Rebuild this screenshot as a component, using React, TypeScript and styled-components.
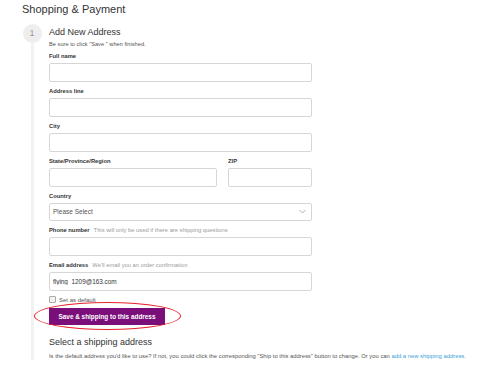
import React from "react";
import styled, { createGlobalStyle } from "styled-components";

const GlobalStyle = createGlobalStyle`
  html, body {
    margin: 0;
    padding: 0;
    background: #ffffff;
  }
  body {
    font-family: "Liberation Sans", Arial, sans-serif;
    color: #333333;
  }
`;

interface FieldProps {
  label: string;
  hint?: string;
  value?: string;
  width?: number;
}

const Field: React.FC<FieldProps> = ({ label, hint, value, width }) => {
  return (
    <StyledField $width={width}>
      <StyledLabel>
        {label}
        {hint && <StyledHint>{hint}</StyledHint>}
      </StyledLabel>
      <StyledInput defaultValue={value} />
    </StyledField>
  );
};

const App: React.FC = () => {
  return (
    <StyledPage>
      <GlobalStyle />
      <StyledTitle>Shopping &amp; Payment</StyledTitle>
      <StyledStep>
        <StyledRail>
          <StyledCircle>1</StyledCircle>
          <StyledLine />
        </StyledRail>
        <StyledContent>
          <StyledHeading>Add New Address</StyledHeading>
          <StyledNote>Be sure to click "Save " when finished.</StyledNote>

          <Field label="Full name" />
          <Field label="Address line" />
          <Field label="City" />
          <StyledRow>
            <Field label="State/Province/Region" width={168} />
            <Field label="ZIP" width={84} />
          </StyledRow>

          <StyledField>
            <StyledLabel>Country</StyledLabel>
            <StyledSelect>
              <span>Please Select</span>
              <svg width="7" height="5" viewBox="0 0 7 5">
                <path d="M0.5 1 L3.5 4 L6.5 1" fill="none" stroke="#aaa" strokeWidth="0.9" />
              </svg>
            </StyledSelect>
          </StyledField>

          <Field label="Phone number" hint="This will only be used if there are shipping questions" />
          <Field label="Email address" hint="We'll email you an order confirmation" value="flying_1209@163.com" />

          <StyledCheckRow>
            <StyledCheckbox />
            <span>Set as default</span>
          </StyledCheckRow>

          <StyledButtonWrap>
            <StyledButton>Save &amp; shipping to this address</StyledButton>
            <StyledRing />
          </StyledButtonWrap>

          <StyledHeading $second>Select a shipping address</StyledHeading>
          <StyledParagraph>
            Is the default address you'd like to use? If not, you could click the corresponding "Ship to this
            address" button to change. Or you can <StyledLink>add a new shipping address.</StyledLink>
          </StyledParagraph>
        </StyledContent>
      </StyledStep>
    </StyledPage>
  );
};

const StyledPage = styled.div`
  width: 500px;
  height: 368px;
  overflow: hidden;
  box-sizing: border-box;
  padding: 2px 0 0 22px;
`;

const StyledTitle = styled.h1`
  margin: 0;
  font-size: 11px;
  line-height: 15px;
  font-weight: normal;
  color: #333;
`;

const StyledStep = styled.div`
  display: flex;
  margin-top: 7px;
`;

const StyledRail = styled.div`
  width: 20px;
  display: flex;
  flex-direction: column;
  align-items: center;
`;

const StyledCircle = styled.div`
  width: 19px;
  height: 19px;
  border-radius: 50%;
  background: #eeeeee;
  color: #999;
  font-size: 9px;
  line-height: 19px;
  text-align: center;
  flex-shrink: 0;
`;

const StyledLine = styled.div`
  width: 3px;
  flex: 1;
  background: #f2f2f2;
`;

const StyledContent = styled.div`
  margin-left: 7px;
  width: 440px;
`;

const StyledHeading = styled.h2<{ $second?: boolean }>`
  margin: ${(p) => (p.$second ? "10px 0 0" : "1px 0 0")};
  font-size: 9px;
  line-height: 14px;
  font-weight: normal;
  color: #333;
`;

const StyledNote = styled.div`
  font-size: 5.7px;
  line-height: 8px;
  color: #555;
  margin: 1px 0 4px;
`;

const StyledField = styled.div<{ $width?: number }>`
  width: ${(p) => p.$width ?? 263}px;
  margin-bottom: 5.5px;
`;

const StyledLabel = styled.div`
  font-size: 5.8px;
  line-height: 8px;
  font-weight: bold;
  color: #333;
  margin-bottom: 2.5px;
`;

const StyledHint = styled.span`
  font-weight: normal;
  color: #9a9a9a;
  margin-left: 4px;
`;

const StyledInput = styled.input`
  display: block;
  box-sizing: border-box;
  width: 100%;
  height: 19px;
  margin: 0;
  border: 1px solid #d6d6d6;
  border-radius: 2px;
  padding: 1px 3px 0;
  font-family: "Liberation Sans", Arial, sans-serif;
  font-size: 6.4px;
  line-height: normal;
  color: #333;
  outline: none;
`;

const StyledRow = styled.div`
  display: flex;
  justify-content: space-between;
  width: 263px;
`;

const StyledSelect = styled.div`
  box-sizing: border-box;
  height: 18px;
  border: 1px solid #d6d6d6;
  border-radius: 2px;
  padding: 0 5px 0 3px;
  display: flex;
  align-items: center;
  justify-content: space-between;
  font-size: 6.5px;
  color: #555;
`;

const StyledCheckRow = styled.div`
  display: flex;
  align-items: center;
  gap: 3px;
  font-size: 6px;
  color: #555;
  margin-top: 3px;
`;

const StyledCheckbox = styled.span`
  display: inline-block;
  box-sizing: border-box;
  width: 7px;
  height: 7px;
  border: 1px solid #aaa;
  border-radius: 1px;
  background: #f4f4f4;
`;

const StyledButtonWrap = styled.div`
  position: relative;
  display: inline-block;
  margin-top: 5px;
`;

const StyledButton = styled.button`
  display: block;
  width: 116px;
  height: 17px;
  border: none;
  margin: 0;
  padding: 0;
  background: #7a0f7a;
  color: #fff;
  font-family: "Liberation Sans", Arial, sans-serif;
  font-size: 6.4px;
  font-weight: bold;
`;

const StyledRing = styled.div`
  position: absolute;
  left: -15px;
  top: -6px;
  width: 147px;
  height: 28px;
  box-sizing: border-box;
  border: 1.3px solid #e8242b;
  border-radius: 50%;
  pointer-events: none;
`;

const StyledParagraph = styled.p`
  margin: 3px 0 0;
  font-size: 5.85px;
  line-height: 8px;
  color: #555;
  white-space: nowrap;
`;

const StyledLink = styled.span`
  color: #3a9fd9;
`;

export default App;
